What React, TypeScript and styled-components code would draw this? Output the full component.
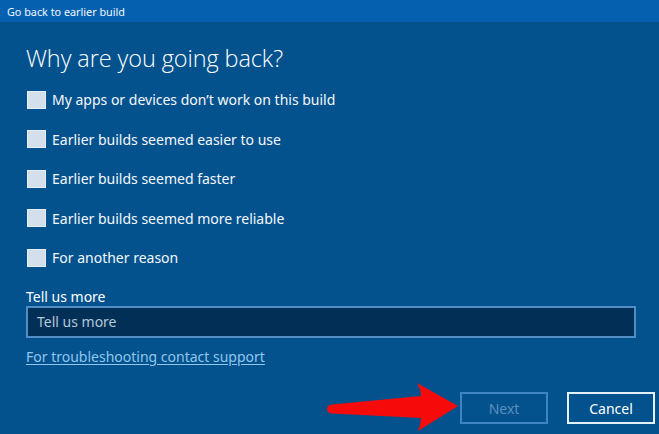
import styled, { createGlobalStyle } from 'styled-components'

const GlobalStyle = createGlobalStyle`
  html, body {
    margin: 0;
    padding: 0;
    width: 659px;
    height: 434px;
    overflow: hidden;
    background: #03528d;
  }
  * {
    box-sizing: border-box;
  }
`

const Window = styled.div`
  position: relative;
  width: 659px;
  height: 434px;
  display: flex;
  flex-direction: column;
  background: #03528d;
  font-family: 'Noto Sans', 'Open Sans', sans-serif;
  color: #ffffff;
`

const TitleBar = styled.div`
  height: 22px;
  flex: none;
  background: #0561b0;
  padding: 0 7px;
  display: flex;
  align-items: center;
  font-size: 10.8px;
  color: #f2f7fc;
`

const Content = styled.div`
  flex: 1;
  display: flex;
  flex-direction: column;
  padding: 0 4px 0 26px;
`

const Heading = styled.h1`
  margin: 20px 0 6px;
  font-family: 'Open Sans', 'Noto Sans', sans-serif;
  font-weight: 300;
  font-size: 23.5px;
  line-height: 32px;
  letter-spacing: -0.1px;
  color: #ffffff;
`

const OptionList = styled.div`
  display: flex;
  flex-direction: column;
`

const OptionRow = styled.label`
  height: 39.5px;
  display: flex;
  align-items: center;
  gap: 6px;
  font-size: 14px;
  color: #f4f8fc;
`

const Box = styled.span`
  width: 19px;
  height: 18px;
  margin-left: 1px;
  flex: none;
  background: #d3dfea;
  border: 1px solid #e6eef5;
`

const FieldLabel = styled.div`
  margin-top: 10px;
  font-size: 14px;
  line-height: 18px;
  color: #ffffff;
`

const TextField = styled.div`
  margin-top: 0;
  width: 610px;
  height: 32px;
  background: #022f56;
  border: 2px solid #4f8dc4;
  display: flex;
  align-items: center;
  padding-left: 9px;
  font-size: 14px;
  color: #b4c8da;
`

const SupportLink = styled.a`
  margin-top: 9px;
  align-self: flex-start;
  font-size: 14px;
  line-height: 20px;
  color: #8fc7ef;
  text-decoration: underline;
  text-underline-offset: 2px;
`

const Footer = styled.div`
  margin-top: auto;
  height: 42px;
  display: flex;
  justify-content: flex-end;
  align-items: flex-start;
  gap: 19px;
`

const Button = styled.button<{ $disabled?: boolean }>`
  width: 88px;
  height: 32px;
  background: #03528d;
  border: 2px solid ${({ $disabled }) => ($disabled ? '#3e86c3' : '#e4f0fa')};
  color: ${({ $disabled }) => ($disabled ? '#5b8fbd' : '#ffffff')};
  font-family: 'Noto Sans', 'Open Sans', sans-serif;
  font-size: 14px;
  padding: 0;
`

const Arrow = styled.svg`
  position: absolute;
  left: 0;
  top: 0;
  pointer-events: none;
`

const options = [
  'My apps or devices don’t work on this build',
  'Earlier builds seemed easier to use',
  'Earlier builds seemed faster',
  'Earlier builds seemed more reliable',
  'For another reason',
]

export default function App() {
  return (
    <Window>
      <GlobalStyle />
      <TitleBar>Go back to earlier build</TitleBar>
      <Content>
        <Heading>Why are you going back?</Heading>
        <OptionList>
          {options.map((text) => (
            <OptionRow key={text}>
              <Box />
              {text}
            </OptionRow>
          ))}
        </OptionList>
        <FieldLabel>Tell us more</FieldLabel>
        <TextField>Tell us more</TextField>
        <SupportLink href="#">For troubleshooting contact support</SupportLink>
        <Footer>
          <Button $disabled>Next</Button>
          <Button>Cancel</Button>
        </Footer>
      </Content>
      <Arrow width="659" height="434" viewBox="0 0 659 434">
        <path
          d="M327 409 Q327 405 332 404.5 L421 396 Q421 390 417 383 L458 406 L418 431 Q421 424 421 418 L332 413.5 Q327 413 327 409 Z"
          fill="#f70a0a"
        />
      </Arrow>
    </Window>
  )
}
